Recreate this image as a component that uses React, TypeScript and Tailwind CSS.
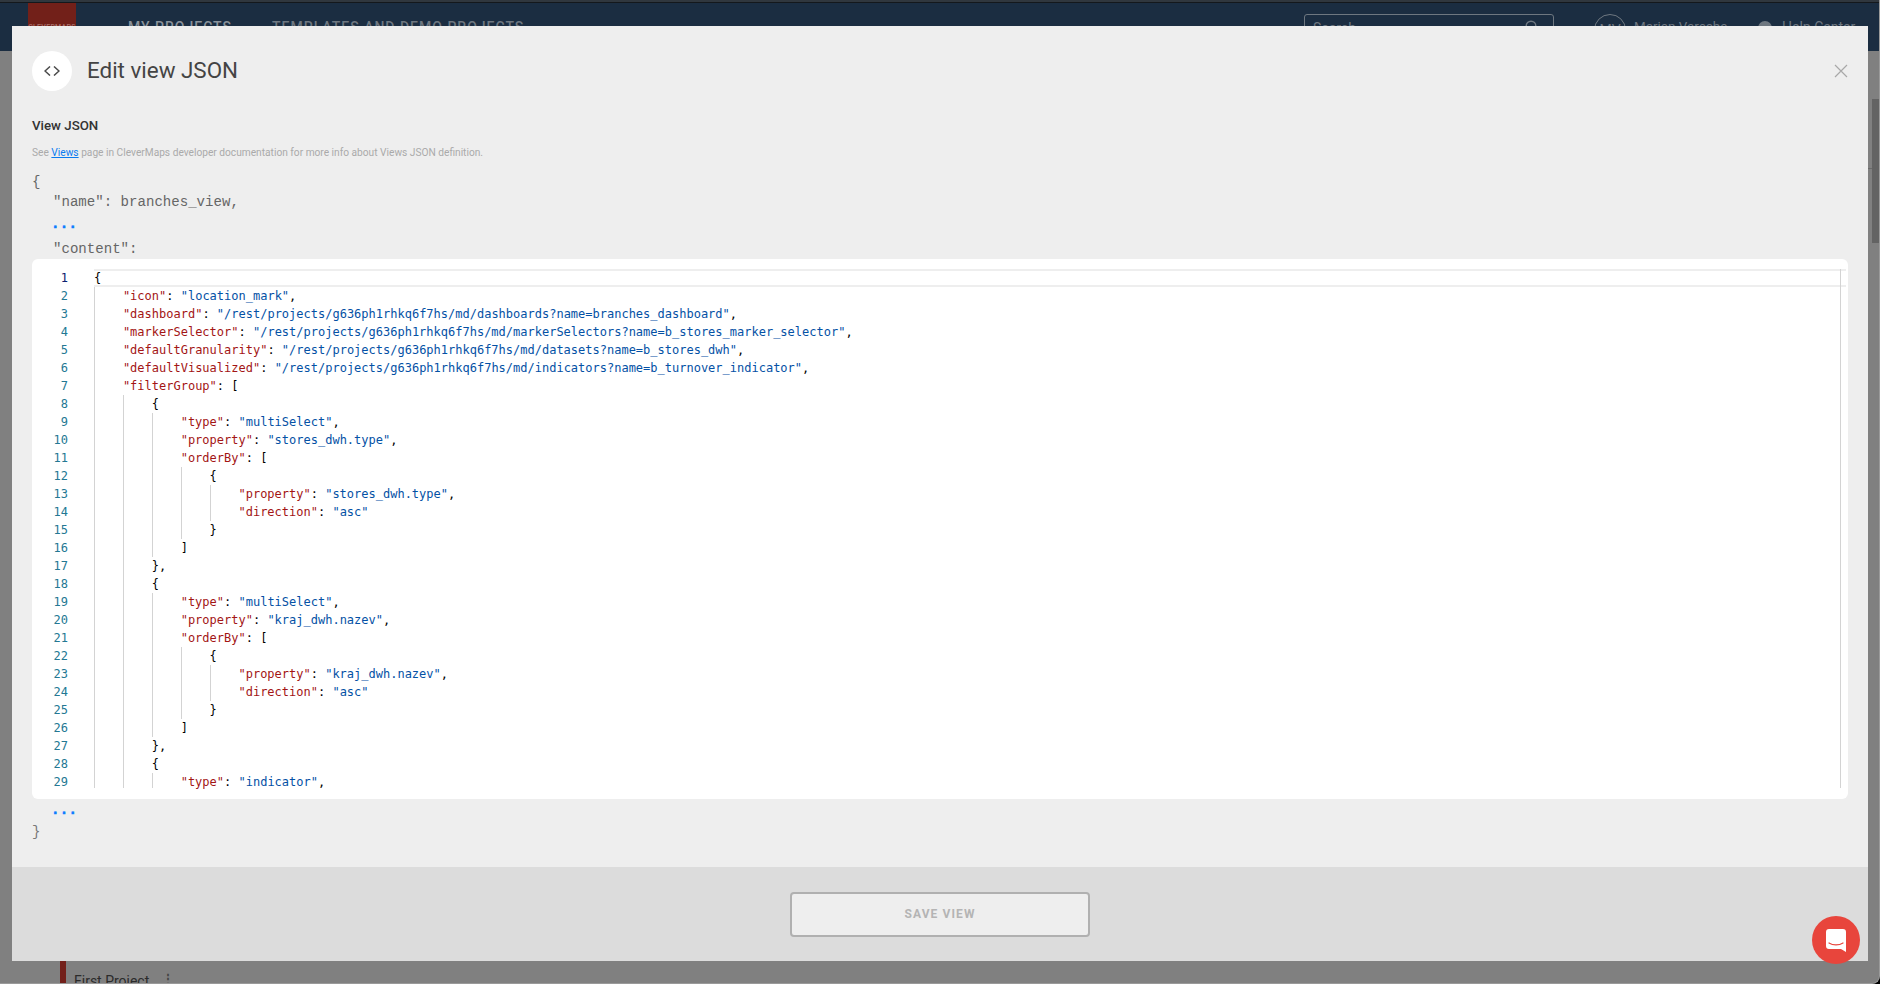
import React from "react";

const code = [
  `{`,
  `    "icon": "location_mark",`,
  `    "dashboard": "/rest/projects/g636ph1rhkq6f7hs/md/dashboards?name=branches_dashboard",`,
  `    "markerSelector": "/rest/projects/g636ph1rhkq6f7hs/md/markerSelectors?name=b_stores_marker_selector",`,
  `    "defaultGranularity": "/rest/projects/g636ph1rhkq6f7hs/md/datasets?name=b_stores_dwh",`,
  `    "defaultVisualized": "/rest/projects/g636ph1rhkq6f7hs/md/indicators?name=b_turnover_indicator",`,
  `    "filterGroup": [`,
  `        {`,
  `            "type": "multiSelect",`,
  `            "property": "stores_dwh.type",`,
  `            "orderBy": [`,
  `                {`,
  `                    "property": "stores_dwh.type",`,
  `                    "direction": "asc"`,
  `                }`,
  `            ]`,
  `        },`,
  `        {`,
  `            "type": "multiSelect",`,
  `            "property": "kraj_dwh.nazev",`,
  `            "orderBy": [`,
  `                {`,
  `                    "property": "kraj_dwh.nazev",`,
  `                    "direction": "asc"`,
  `                }`,
  `            ]`,
  `        },`,
  `        {`,
  `            "type": "indicator",`,
];

function Tokens({ text }: { text: string }) {
  const parts = text.split(/("[^"]*"(?::)?)/).filter(Boolean);
  return (
    <>
      {parts.map((p, i) => {
        if (p.endsWith(":")) {
          return (
            <React.Fragment key={i}>
              <span className="text-[#a31515]">{p.slice(0, -1)}</span>
              <span>:</span>
            </React.Fragment>
          );
        }
        if (p.startsWith('"')) return <span key={i} className="text-[#0451a5]">{p}</span>;
        return <span key={i}>{p}</span>;
      })}
    </>
  );
}

function CodeLine({ raw, n }: { raw: string; n: number }) {
  const text = raw.trimStart();
  const level = (raw.length - text.length) / 4;
  return (
    <div className="flex h-[18px] leading-[18px] whitespace-pre">
      <div className={`w-[36px] mr-[26px] text-right shrink-0 ${n === 1 ? "text-[#0b216f]" : "text-[#237893]"}`}>{n}</div>
      {Array.from({ length: level }).map((_, i) => (
        <span key={i} className={`w-[28.9px] shrink-0 border-l border-[#d3d3d3] ${n === 29 ? "h-[15px]" : "h-[18px]"}`} />
      ))}
      <span className="text-black"><Tokens text={text} /></span>
    </div>
  );
}

function Dots() {
  return <span className="font-bold text-[#0a7bff] ml-[19px] whitespace-pre tracking-[0.3px] [-webkit-text-stroke:0.6px_#0a7bff]">...</span>;
}

export default function App() {
  return (
    <div className="w-[1880px] h-[984px] bg-black">
      <div className="relative w-[1880px] h-[984px] overflow-hidden bg-[#808080] rounded-br-[8px] border-b border-r border-[#9a9a9a] font-['Roboto',sans-serif]">
        {/* page behind the modal */}
        <div className="h-[3px] bg-[#30373e] border-b border-[#14181c]" />
        <header className="h-[48px] bg-[#1b2d41] flex items-start text-[#6e7780] text-[14px] font-medium">
          <div className="ml-[28px] w-[48px] h-[48px] bg-[#722019] text-[7px] leading-[10px] text-center text-[#a9706b] pt-[19px] tracking-[0.3px]">CLEVERMAPS</div>
          <div className="ml-[52px] mt-[14px] tracking-[1px] text-[#8a929a]">MY PROJECTS</div>
          <div className="ml-[40px] mt-[14px] tracking-[1px]">TEMPLATES AND DEMO PROJECTS</div>
          <div className="ml-auto mt-[11px] w-[250px] h-[30px] border border-[#6e7780] rounded-[3px] pl-[8px] pr-[14px] pt-[3px] font-normal flex justify-between">
            <span>Search</span>
            <svg className="mt-[2px]" width="14" height="14" viewBox="0 0 14 14" fill="none" stroke="#6e7780" strokeWidth="1.4">
              <circle cx="6" cy="6" r="4.8" />
              <path d="M9.5 9.5 13 13" />
            </svg>
          </div>
          <div className="ml-[40px] mt-[11px] w-[32px] h-[32px] rounded-full border border-[#6e7780] text-center leading-[30px] font-normal">MV</div>
          <div className="ml-[8px] mt-[14px] font-normal w-[124px] text-[13.4px]">Marian Varecha</div>
          <div className="mt-[18px] w-[14px] h-[14px] rounded-full bg-[#6e7780]" />
          <div className="ml-[10px] mt-[14px] font-normal w-[97px]">Help Center</div>
        </header>
        <div className="flex h-[932px]">
          <div className="flex-1" />
          <div className="w-[11px] pl-[4px] pt-[48px]">
            <div className="h-[144px] bg-[#636363]" />
          </div>
        </div>
        <div className="absolute left-[1868px] top-[168px] w-[4px] h-px bg-[#6a6a6a]" />
        <div className="absolute left-[60px] top-[961px] w-[6px] h-[23px] bg-[#73201a]" />
        <div className="absolute left-[74px] top-[971px] text-[14px] text-[#2b2b2b]">First Project</div>
        <div className="absolute left-[162px] top-[973px] text-[12px] text-[#444] font-bold leading-none">⋮</div>

        {/* modal */}
        <div className="absolute left-[12px] top-[26px] w-[1856px] h-[935px] flex flex-col bg-[#eeeeee]">
          <div className="flex-1 px-[20px] pt-[25px]">
            <div className="flex items-center h-[40px]">
              <div className="w-[40px] h-[40px] rounded-full bg-white flex items-center justify-center">
                <svg width="16" height="10" viewBox="0 0 16 10" fill="none" stroke="#4a4a4a" strokeWidth="1.5">
                  <path d="M6 .5 1 5l5 4.5M10 .5 15 5l-5 4.5" />
                </svg>
              </div>
              <h1 className="ml-[15px] pb-[2px] text-[22.4px] leading-none text-[#444444]">Edit view JSON</h1>
              <svg className="ml-auto" width="14" height="14" viewBox="0 0 14 14" stroke="#a8a8a8" strokeWidth="1.2">
                <path d="M1 1l12 12M13 1 1 13" />
              </svg>
            </div>
            <div className="mt-[27px] text-[13.3px] leading-[16px] font-medium text-[#333]">View JSON</div>
            <div className="mt-[12px] text-[10.19px] leading-[14px] text-[#aaaaaa]">
              See <span className="text-[#0a7bf0] underline">Views</span> page in CleverMaps developer documentation for more info about Views JSON definition.
            </div>
            <div className="font-['Liberation_Mono',monospace] text-[14.08px] text-[#666] mt-[12px]">
              <div className="h-[20px] leading-[20px]">{"{"}</div>
              <div className="h-[21px] leading-[21px] ml-[21px] whitespace-pre">"name": branches_view,</div>
              <div className="h-[26px] pt-[2px] leading-[18px]"><Dots /></div>
              <div className="h-[20px] leading-[20px] ml-[21px] whitespace-pre">"content":</div>
            </div>
            <div className="bg-white rounded-[6px] w-[1816px] h-[540px] pt-[10px] relative font-['DejaVu_Sans_Mono',monospace] text-[12px] overflow-hidden">
              <div className="h-[522px] overflow-hidden relative">
                {code.map((l, i) => <CodeLine key={i} raw={l} n={i + 1} />)}
                <div className="absolute left-[62px] top-[0px] w-[1752px] h-[18px] border-y-2 border-[#eeeeee]" />
                <div className="absolute left-[1808px] top-0 h-[519px] w-px bg-[#d3d3d3]" />
              </div>
            </div>
            <div className="font-['Liberation_Mono',monospace] text-[14.08px]">
              <div className="h-[24px] pt-[2px] leading-[18px]"><Dots /></div>
              <div className="h-[18px] leading-[18px] text-[#777]">{"}"}</div>
            </div>
          </div>
          <div className="h-[94px] bg-[#dcdcdc] flex items-center justify-center">
            <button className="w-[300px] h-[45px] rounded-[4px] border-2 border-[#b0b0b0] bg-[#eeeeee] text-[12px] font-bold tracking-[1.1px] text-[#b4b4b4]">SAVE VIEW</button>
          </div>
        </div>

        {/* chat bubble */}
        <div className="absolute left-[1812px] top-[916px] w-[48px] h-[48px] rounded-full bg-[#e8453c] flex items-center justify-center">
          <svg width="20" height="23" viewBox="0 0 20 23">
            <path d="M3 0h14a3 3 0 0 1 3 3v20l-5-3H3a3 3 0 0 1-3-3V3a3 3 0 0 1 3-3z" fill="#fff" />
            <path d="M3 14c4 2.6 10 2.6 14 0" fill="none" stroke="#e8453c" strokeWidth="1.2" strokeLinecap="round" />
          </svg>
        </div>
      </div>
    </div>
  );
}
